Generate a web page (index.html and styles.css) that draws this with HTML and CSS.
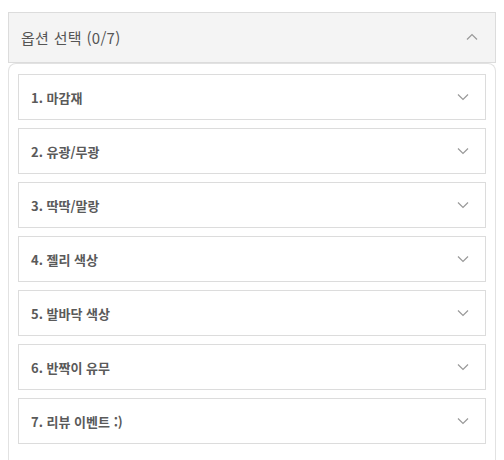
FILE: index.html
```html
<!DOCTYPE html>
<html lang="ko">
<head>
<meta charset="utf-8">
<link rel="stylesheet" href="styles.css">
</head>
<body>
<div class="wrap">
  <div class="head">
    <span class="head-title">옵션 선택 (0/7)</span>
    <svg class="chev-up" width="12" height="7" viewBox="0 0 12 7"><path d="M1 6.5 L6 1.5 L11 6.5" fill="none" stroke="#999" stroke-width="1.2"/></svg>
  </div>
  <div class="panel">
    <div class="item"><span>1. 마감재</span><svg class="chev" width="12" height="7" viewBox="0 0 12 7"><path d="M1 0.5 L6 5.5 L11 0.5" fill="none" stroke="#999" stroke-width="1.2"/></svg></div>
    <div class="item"><span>2. 유광/무광</span><svg class="chev" width="12" height="7" viewBox="0 0 12 7"><path d="M1 0.5 L6 5.5 L11 0.5" fill="none" stroke="#999" stroke-width="1.2"/></svg></div>
    <div class="item"><span>3. 딱딱/말랑</span><svg class="chev" width="12" height="7" viewBox="0 0 12 7"><path d="M1 0.5 L6 5.5 L11 0.5" fill="none" stroke="#999" stroke-width="1.2"/></svg></div>
    <div class="item"><span>4. 젤리 색상</span><svg class="chev" width="12" height="7" viewBox="0 0 12 7"><path d="M1 0.5 L6 5.5 L11 0.5" fill="none" stroke="#999" stroke-width="1.2"/></svg></div>
    <div class="item"><span>5. 발바닥 색상</span><svg class="chev" width="12" height="7" viewBox="0 0 12 7"><path d="M1 0.5 L6 5.5 L11 0.5" fill="none" stroke="#999" stroke-width="1.2"/></svg></div>
    <div class="item"><span>6. 반짝이 유무</span><svg class="chev" width="12" height="7" viewBox="0 0 12 7"><path d="M1 0.5 L6 5.5 L11 0.5" fill="none" stroke="#999" stroke-width="1.2"/></svg></div>
    <div class="item"><span>7. 리뷰 이벤트 :)</span><svg class="chev" width="12" height="7" viewBox="0 0 12 7"><path d="M1 0.5 L6 5.5 L11 0.5" fill="none" stroke="#999" stroke-width="1.2"/></svg></div>
  </div>
</div>
</body>
</html>
```
FILE: styles.css
```css
html, body {
  margin: 0;
  padding: 0;
  background: #fff;
  font-family: "Noto Sans CJK KR", "Noto Sans", sans-serif;
  color: #555;
}
.wrap {
  padding: 12px 8px 0 8px;
}
.head {
  height: 49px;
  border: 1px solid #dcdcdc;
  background: #f4f4f4;
  display: flex;
  align-items: center;
  justify-content: space-between;
  padding: 0 17px 0 12px;
}
.head-title {
  font-size: 15px;
  color: #555;
  letter-spacing: 0.3px;
}
.chev-up {
  margin-top: -2px;
}
.panel {
  border: 1px solid #e2e2e2;
  border-bottom: none;
  border-radius: 8px 8px 0 0;
  padding: 10px 9px 20px 9px;
  display: flex;
  flex-direction: column;
  gap: 8px;
}
.item {
  height: 44px;
  border: 1px solid #dcdcdc;
  display: flex;
  align-items: center;
  justify-content: space-between;
  padding: 0 16px 0 12px;
  font-size: 13px;
  font-weight: 700;
  color: #5a5a5a;
}
.chev {
  margin-top: 1px;
}
```
